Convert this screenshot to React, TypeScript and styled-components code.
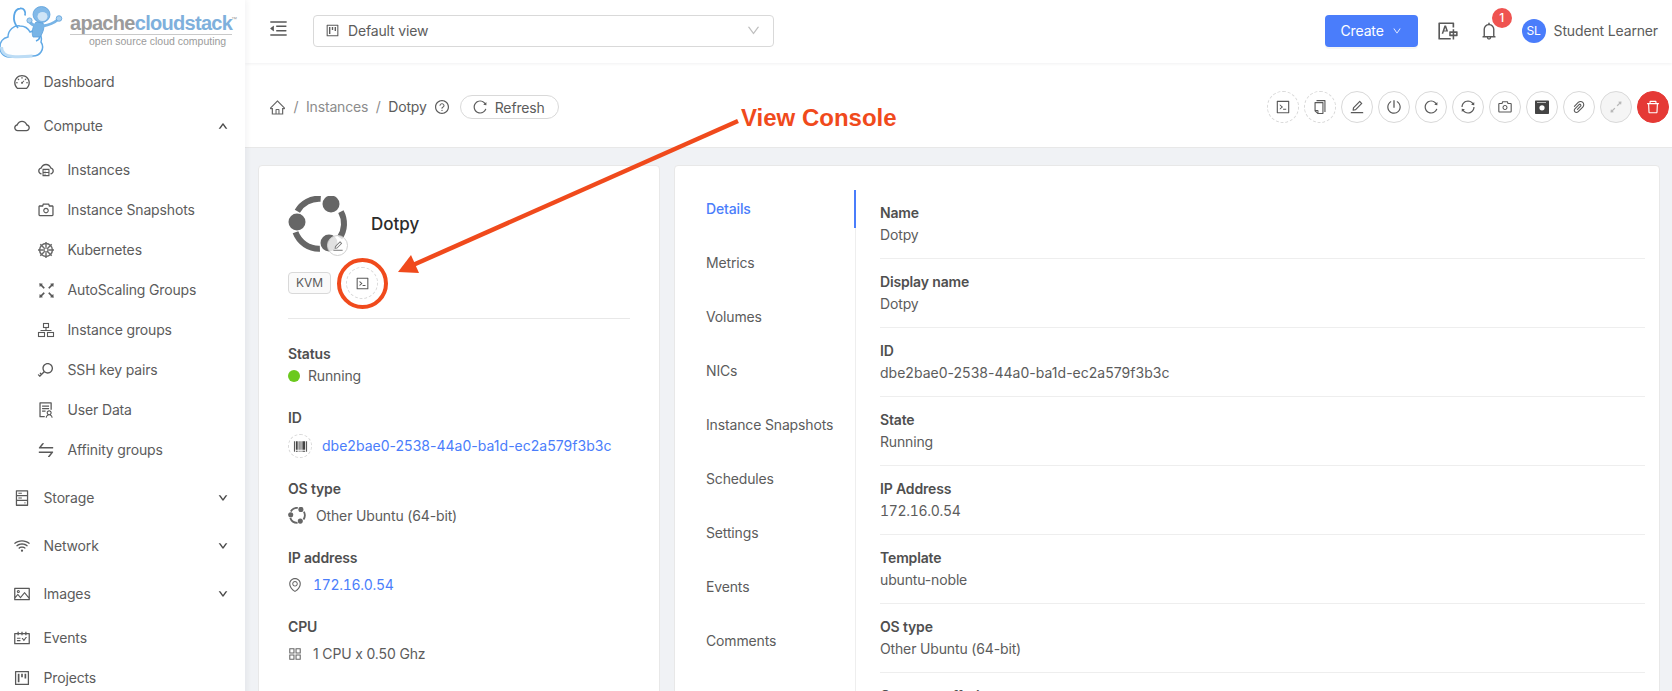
import { FC, ReactNode } from "react";
import styled, { createGlobalStyle } from "styled-components";
import {
  AiOutlineAppstore,
  AiOutlineArrowsAlt,
  AiOutlineBarcode,
  AiOutlineBell,
  AiOutlineCamera,
  AiOutlineCloud,
  AiOutlineCloudServer,
  AiOutlineCode,
  AiOutlineCopy,
  AiOutlineDashboard,
  AiOutlineDelete,
  AiOutlineDown,
  AiOutlineEdit,
  AiOutlineEnvironment,
  AiOutlineFullscreen,
  AiOutlineHdd,
  AiOutlineHome,
  AiOutlineKey,
  AiOutlineMenuFold,
  AiOutlinePaperClip,
  AiOutlinePicture,
  AiOutlinePoweroff,
  AiOutlineProject,
  AiOutlineQuestionCircle,
  AiOutlineReload,
  AiOutlineSchedule,
  AiOutlineSolution,
  AiOutlineSwap,
  AiOutlineSync,
  AiOutlineTranslation,
  AiOutlineUp,
  AiOutlineWifi,
} from "react-icons/ai";

const BLUE = "#4a7dfb";
const TEXT = "#5c5c5c";

const KubernetesIcon = () => (
  <svg width="1em" height="1em" viewBox="0 0 18 18" fill="none" stroke="#6a6a6a">
    <circle cx="9" cy="9" r="6.4" strokeWidth="1.5" />
    <circle cx="9" cy="9" r="2" strokeWidth="1.2" />
    <path
      d="M9 1v5.5M9 11.5V17M1 9h5.5M11.5 9H17M3.3 3.3l4 4M10.7 10.7l4 4M14.7 3.3l-4 4M7.3 10.7l-4 4"
      strokeWidth="1.4"
    />
  </svg>
);

const GroupsIcon = () => (
  <svg width="1em" height="1em" viewBox="0 0 18 18" fill="none" stroke="#595959" strokeWidth="1.1">
    <rect x="6.5" y="2.5" width="5" height="4" />
    <path d="M9 6.5v3M3.5 9.5h11" />
    <rect x="1.5" y="11.5" width="6" height="4" />
    <rect x="10.5" y="11.5" width="6" height="4" />
  </svg>
);

const BackupIcon = () => (
  <svg width="1em" height="1em" viewBox="0 0 16 16">
    <path d="M1 2.5c0-.6.4-1 1-1h12c.6 0 1 .4 1 1V14c0 .6-.4 1-1 1H2c-.6 0-1-.4-1-1z" fill="#444" />
    <rect x="3" y="3" width="9" height="1" fill="#bbb" />
    <circle cx="8" cy="8.800" r="2.600" fill="#fff" />
  </svg>
);

type NavEntry = {
  label: string;
  icon: ReactNode;
  sub?: boolean;
  gap: number;
  arrow?: "up" | "down";
};

const navEntries: NavEntry[] = [
  { label: "Dashboard", icon: <AiOutlineDashboard />, gap: 0 },
  { label: "Compute", icon: <AiOutlineCloud />, gap: 4, arrow: "up" },
  { label: "Instances", icon: <AiOutlineCloudServer />, sub: true, gap: 4 },
  { label: "Instance Snapshots", icon: <AiOutlineCamera />, sub: true, gap: 0 },
  { label: "Kubernetes", icon: <KubernetesIcon />, sub: true, gap: 0 },
  { label: "AutoScaling Groups", icon: <AiOutlineFullscreen size={21} />, sub: true, gap: 0 },
  { label: "Instance groups", icon: <GroupsIcon />, sub: true, gap: 0 },
  { label: "SSH key pairs", icon: <AiOutlineKey />, sub: true, gap: 0 },
  { label: "User Data", icon: <AiOutlineSolution />, sub: true, gap: 0 },
  { label: "Affinity groups", icon: <AiOutlineSwap size={20} />, sub: true, gap: 0 },
  { label: "Storage", icon: <AiOutlineHdd />, gap: 8, arrow: "down" },
  { label: "Network", icon: <AiOutlineWifi />, gap: 8, arrow: "down" },
  { label: "Images", icon: <AiOutlinePicture />, gap: 8, arrow: "down" },
  { label: "Events", icon: <AiOutlineSchedule />, gap: 4 },
  { label: "Projects", icon: <AiOutlineProject />, gap: 0 },
];

const tabs = [
  "Details",
  "Metrics",
  "Volumes",
  "NICs",
  "Instance Snapshots",
  "Schedules",
  "Settings",
  "Events",
  "Comments",
];

type ValueKind = "text" | "id" | "ip";

const details: { label: string; value: string; kind: ValueKind }[] = [
  { label: "Name", value: "Dotpy", kind: "text" },
  { label: "Display name", value: "Dotpy", kind: "text" },
  { label: "ID", value: "dbe2bae0-2538-44a0-ba1d-ec2a579f3b3c", kind: "id" },
  { label: "State", value: "Running", kind: "text" },
  { label: "IP Address", value: "172.16.0.54", kind: "ip" },
  { label: "Template", value: "ubuntu-noble", kind: "text" },
  { label: "OS type", value: "Other Ubuntu (64-bit)", kind: "text" },
];

const actions: { icon: ReactNode; kind: "dashed" | "plain" | "muted" | "danger" }[] = [
  { icon: <AiOutlineCode />, kind: "dashed" },
  { icon: <AiOutlineCopy />, kind: "dashed" },
  { icon: <AiOutlineEdit />, kind: "plain" },
  { icon: <AiOutlinePoweroff />, kind: "plain" },
  { icon: <AiOutlineReload />, kind: "plain" },
  { icon: <AiOutlineSync />, kind: "plain" },
  { icon: <AiOutlineCamera />, kind: "plain" },
  { icon: <BackupIcon />, kind: "plain" },
  { icon: <AiOutlinePaperClip />, kind: "plain" },
  { icon: <AiOutlineArrowsAlt />, kind: "muted" },
  { icon: <AiOutlineDelete />, kind: "danger" },
];

const UbuntuIcon: FC<{ size: number }> = ({ size }) => (
  <svg width={size} height={size} viewBox="0 0 60 60" fill="none">
    <g stroke="#666" strokeWidth="6">
      <path d="M9.35 15.2A25 25 0 0 1 32.7 2.75" />
      <path d="M52.9 15.6A25 25 0 0 1 51.7 41.7" />
      <path d="M31.9 52.7A25 25 0 0 1 7.5 36.25" />
    </g>
    <g fill="#666">
      <circle cx="43" cy="8" r="8.5" />
      <circle cx="9" cy="26" r="8.5" />
      <circle cx="41" cy="47" r="8.5" />
    </g>
  </svg>
);

const LogoMark = () => (
  <svg width="64" height="58" viewBox="0 0 64 58" fill="none">
    <path
      d="M9 55C3 55 0 50 0 45c0-5 3-9 8-10 0-7 6-12 12-11 4 0 8 2 10 6 2-1 5-1 7 0 4 2 5 6 4 10 2 3 2 7 0 10-2 3-5 4-8 4-8 1-16 1-24 1z"
      fill="#fdfeff"
      stroke="#62aae6"
      strokeWidth="1.5"
    />
    <path d="M1.500 45c0 6 5 9 11 9.500 7 .5 14 0 20-.5" stroke="#bcdcf5" strokeWidth="3" />
    <path d="M18 26C11 18 14 7 20 6.500c4-.5 6 3 5 7" stroke="#5aa6e6" strokeWidth="1.8" />
    <path d="M38 29c3 3 3 8-2 10" stroke="#5aa6e6" strokeWidth="1.6" />
    <path d="M33 35c-2-5 0-11 3-15l7 1c2 4 0 10-3 14z" fill="#78b4e6" stroke="#5a9fdb" strokeWidth="0.8" />
    <ellipse cx="41.500" cy="12.500" rx="8.500" ry="8" fill="#82b9e8" stroke="#5a9fdb" strokeWidth="0.8" />
    <ellipse cx="42.500" cy="14.500" rx="5" ry="4.500" fill="#cfe5f7" />
    <path d="M43 24c6-1 11-3 15-6.500" stroke="#78b4e6" strokeWidth="2.8" strokeLinecap="round" />
    <circle cx="59" cy="16.500" r="2.800" fill="#a9d0f0" stroke="#5a9fdb" strokeWidth="0.8" />
    <path d="M36 24c-3-1-5-2-6-4" stroke="#78b4e6" strokeWidth="2.800" strokeLinecap="round" />
    <circle cx="29.500" cy="18.500" r="2.600" fill="#a9d0f0" stroke="#5a9fdb" strokeWidth="0.8" />
  </svg>
);

const ConsoleArrow = () => (
  <ArrowCanvas width="1672" height="691" viewBox="0 0 1672 691">
    <path d="M738 121L413 265" stroke="#f04a1c" strokeWidth="4.500" fill="none" />
    <path d="M398 272L411 255L419 273Z" fill="#f04a1c" />
  </ArrowCanvas>
);

const App = () => (
  <>
    <GlobalStyle />
    <Shell>
      <Sidebar>
        <Logo>
          <LogoMark />
          <Wordmark>
            <Brand>
              apache<BrandBlue>cloudstack</BrandBlue>
              <Tm>™</Tm>
            </Brand>
            <BrandSub>open source cloud computing</BrandSub>
          </Wordmark>
        </Logo>
        <Menu>
          {navEntries.map((entry) => (
            <MenuItem key={entry.label} $sub={entry.sub} $gap={entry.gap}>
              <MenuIcon>{entry.icon}</MenuIcon>
              <span>{entry.label}</span>
              {entry.arrow && (
                <MenuArrow>
                  {entry.arrow === "up" ? <AiOutlineUp /> : <AiOutlineDown />}
                </MenuArrow>
              )}
            </MenuItem>
          ))}
        </Menu>
      </Sidebar>

      <Content>
        <Header>
          <Collapse>
            <AiOutlineMenuFold />
          </Collapse>
          <ViewSelect>
            <AiOutlineProject />
            <ViewName>Default view</ViewName>
            <SelectArrow>
              <AiOutlineDown />
            </SelectArrow>
          </ViewSelect>
          <HeaderRight>
            <CreateButton>
              Create
              <AiOutlineDown />
            </CreateButton>
            <Translate>
              <AiOutlineTranslation />
            </Translate>
            <Bell>
              <AiOutlineBell />
              <Badge>1</Badge>
            </Bell>
            <User>
              <UserAvatar>SL</UserAvatar>
              Student Learner
            </User>
          </HeaderRight>
        </Header>

        <Crumbs>
          <CrumbTrail>
            <HomeIcon>
              <AiOutlineHome />
            </HomeIcon>
            <Slash>/</Slash>
            <CrumbLink>Instances</CrumbLink>
            <Slash>/</Slash>
            <CrumbCurrent>Dotpy</CrumbCurrent>
            <HelpIcon>
              <AiOutlineQuestionCircle />
            </HelpIcon>
            <RefreshButton>
              <AiOutlineReload />
              Refresh
            </RefreshButton>
          </CrumbTrail>
          <Actions>
            {actions.map((action, i) => (
              <ActionButton key={i} $kind={action.kind}>
                {action.icon}
              </ActionButton>
            ))}
          </Actions>
        </Crumbs>

        <Body>
          <InfoCard>
            <Identity>
              <AvatarWrap>
                <UbuntuIcon size={60} />
                <AvatarEdit>
                  <AiOutlineEdit />
                </AvatarEdit>
              </AvatarWrap>
              <InstanceName>Dotpy</InstanceName>
            </Identity>
            <TagRow>
              <Tag>KVM</Tag>
              <ConsoleButton>
                <AiOutlineCode />
                <ConsoleRing />
              </ConsoleButton>
            </TagRow>
            <Rule />
            <Field>
              <FieldLabel>Status</FieldLabel>
              <FieldValue $top={0}>
                <StatusDot />
                Running
              </FieldValue>
            </Field>
            <Field>
              <FieldLabel>ID</FieldLabel>
              <FieldValue $top={5}>
                <BarcodeButton>
                  <AiOutlineBarcode />
                </BarcodeButton>
                <ValueLink>
                  <ValueText $kind="id">dbe2bae0-2538-44a0-ba1d-ec2a579f3b3c</ValueText>
                </ValueLink>
              </FieldValue>
            </Field>
            <Field>
              <FieldLabel>OS type</FieldLabel>
              <FieldValue $top={5}>
                <OsIcon>
                  <UbuntuIcon size={18} />
                </OsIcon>
                Other Ubuntu (64-bit)
              </FieldValue>
            </Field>
            <Field>
              <FieldLabel>IP address</FieldLabel>
              <FieldValue $top={5}>
                <SmallIcon>
                  <AiOutlineEnvironment />
                </SmallIcon>
                <ValueLink>
                  <ValueText $kind="ip">172.16.0.54</ValueText>
                </ValueLink>
              </FieldValue>
            </Field>
            <Field>
              <FieldLabel>CPU</FieldLabel>
              <FieldValue $top={5}>
                <SmallIcon>
                  <AiOutlineAppstore />
                </SmallIcon>
                1 CPU x 0.50 Ghz
              </FieldValue>
            </Field>
          </InfoCard>

          <DetailCard>
            <TabList>
              {tabs.map((tab, i) => (
                <Tab key={tab} $active={i === 0}>
                  {tab}
                </Tab>
              ))}
            </TabList>
            <DetailList>
              {details.map((row) => (
                <DetailRow key={row.label}>
                  <DetailLabel>{row.label}</DetailLabel>
                  <ValueText $kind={row.kind}>{row.value}</ValueText>
                </DetailRow>
              ))}
              <DetailRow>
                <DetailLabel>Compute offering</DetailLabel>
              </DetailRow>
            </DetailList>
          </DetailCard>
        </Body>
      </Content>
      <ConsoleArrow />
      <CalloutLabel>View Console</CalloutLabel>
    </Shell>
  </>
);

export default App;

const GlobalStyle = createGlobalStyle`
  html, body {
    margin: 0;
    height: 691px;
    overflow: hidden;
    background: #f0f2f5;
    color: ${TEXT};
    font-family: Inter, "Noto Sans", sans-serif;
    font-size: 14px;
    line-height: 22px;
    letter-spacing: -0.15px;
  }
  * {
    box-sizing: border-box;
  }
`;

const Shell = styled.div`
  position: relative;
  display: grid;
  grid-template-columns: 245px 1fr;
  height: 691px;
  overflow: hidden;
`;

const ArrowCanvas = styled.svg`
  position: absolute;
  inset: 0;
  pointer-events: none;
  z-index: 3;
`;

const CalloutLabel = styled.div`
  position: absolute;
  left: 741px;
  top: 104px;
  z-index: 3;
  color: #f04a1c;
  font-family: "Liberation Sans", Arial, sans-serif;
  font-size: 24px;
  font-weight: 700;
  line-height: 28px;
  letter-spacing: 0;
  white-space: nowrap;
`;

const Sidebar = styled.aside`
  background: #fff;
  box-shadow: 2px 0 6px rgba(0, 21, 41, 0.05);
  z-index: 2;
  overflow: hidden;
`;

const Logo = styled.div`
  display: flex;
  align-items: flex-start;
  height: 62px;
  padding-top: 2px;
  gap: 6px;
`;

const Wordmark = styled.div`
  display: flex;
  flex-direction: column;
  margin-top: 10px;
  width: 162px;
`;

const Brand = styled.div`
  position: relative;
  border-bottom: 1px solid #c9c9c9;
  color: #9b9b9b;
  font-family: "Liberation Sans", Arial, sans-serif;
  font-size: 20px;
  font-weight: 700;
  line-height: 22px;
  letter-spacing: -0.7px;
  white-space: nowrap;
`;

const BrandBlue = styled.span`
  color: #7fb0dc;
`;

const Tm = styled.span`
  position: absolute;
  top: -4px;
  left: 161px;
  font-size: 6px;
  letter-spacing: 0;
  font-weight: 400;
`;

const BrandSub = styled.div`
  margin-left: 19px;
  color: #9b9b9b;
  font-family: "Liberation Sans", Arial, sans-serif;
  font-size: 10.5px;
  line-height: 13px;
  letter-spacing: 0;
  white-space: nowrap;
`;

const Menu = styled.nav`
  display: flex;
  flex-direction: column;
`;

const MenuItem = styled.div<{ $sub?: boolean; $gap: number }>`
  display: flex;
  align-items: center;
  height: 40px;
  flex: none;
  margin-top: ${(p) => p.$gap}px;
  padding-left: ${(p) => (p.$sub ? 37 : 13)}px;
  padding-right: 16px;
  white-space: nowrap;
`;

const MenuIcon = styled.span`
  display: inline-flex;
  justify-content: center;
  width: 18px;
  margin-right: 12.5px;
  font-size: 18px;
  color: #595959;

  svg {
    flex: none;
  }
`;

const MenuArrow = styled.span`
  display: inline-flex;
  margin-left: auto;
  margin-right: 1px;
  font-size: 10px;
  color: #333;

  svg {
    stroke: currentColor;
    stroke-width: 60;
  }
`;

const Content = styled.main`
  display: flex;
  flex-direction: column;
  min-width: 0;
`;

const Header = styled.header`
  display: flex;
  align-items: center;
  flex: none;
  height: 63px;
  padding-left: 23px;
  padding-right: 14px;
  padding-bottom: 2px;
  background: #fff;
  box-shadow: 0 1px 3px rgba(0, 21, 41, 0.06);
  z-index: 1;
`;

const Collapse = styled.span`
  display: inline-flex;
  margin-top: -4px;
  margin-right: 24px;
  font-size: 21px;
  color: #595959;
`;

const ViewSelect = styled.div`
  display: flex;
  align-items: center;
  width: 461px;
  height: 32px;
  padding: 0 11px;
  border: 1px solid #d9d9d9;
  border-radius: 4px;
  font-size: 14px;

  svg {
    font-size: 15px;
  }
`;

const ViewName = styled.span`
  margin-left: 8px;
`;

const SelectArrow = styled.span`
  display: inline-flex;
  margin-left: auto;
  margin-right: 1px;
  color: #bfbfbf;
`;

const HeaderRight = styled.div`
  display: flex;
  align-items: center;
  margin-left: auto;
`;

const CreateButton = styled.button`
  display: flex;
  align-items: center;
  justify-content: center;
  gap: 8px;
  width: 93px;
  height: 32px;
  border: none;
  border-radius: 4px;
  background: ${BLUE};
  color: #fff;
  box-shadow: 0 2px 0 rgba(0, 0, 0, 0.04);
  font-family: inherit;
  font-size: 14px;
  letter-spacing: inherit;

  svg {
    font-size: 10px;
  }
`;

const Translate = styled.span`
  display: inline-flex;
  margin-left: 19px;
  font-size: 22px;
  color: #595959;
`;

const Bell = styled.span`
  position: relative;
  display: inline-flex;
  margin-left: 20px;
  font-size: 20px;
  color: #595959;
`;

const Badge = styled.span`
  position: absolute;
  top: -13px;
  left: 13px;
  width: 20px;
  height: 20px;
  border-radius: 50%;
  background: #ef5350;
  color: #fff;
  font-size: 12px;
  font-weight: 500;
  line-height: 20px;
  text-align: center;
`;

const User = styled.div`
  display: flex;
  align-items: center;
  gap: 8px;
  margin-left: 23px;
  white-space: nowrap;
`;

const UserAvatar = styled.span`
  width: 24px;
  height: 24px;
  border-radius: 50%;
  background: ${BLUE};
  color: #fff;
  font-size: 12px;
  line-height: 24px;
  text-align: center;
`;

const Crumbs = styled.div`
  display: flex;
  align-items: center;
  justify-content: space-between;
  flex: none;
  height: 85px;
  padding-top: 4px;
  padding-left: 24px;
  padding-right: 3px;
  background: #fff;
  border-bottom: 1px solid #e8e8e8;
`;

const CrumbTrail = styled.div`
  display: flex;
  align-items: center;
`;

const HomeIcon = styled.span`
  display: inline-flex;
  font-size: 17px;
  color: #666;
`;

const Slash = styled.span`
  margin: 0 7.5px;
  color: #8c8c8c;
`;

const CrumbLink = styled.span`
  color: #8c8c8c;
`;

const CrumbCurrent = styled.span`
  color: ${TEXT};
`;

const HelpIcon = styled.span`
  display: inline-flex;
  margin-left: 7px;
  font-size: 16px;
`;

const RefreshButton = styled.button`
  display: flex;
  align-items: center;
  gap: 7px;
  height: 24px;
  margin-left: 10px;
  padding: 0 13px 0 11px;
  border: 1px solid #d9d9d9;
  border-radius: 12px;
  background: #fff;
  color: ${TEXT};
  font-family: inherit;
  font-size: 14px;
  letter-spacing: inherit;

  svg {
    font-size: 16px;
  }
`;

const Actions = styled.div`
  display: flex;
  gap: 5px;
`;

const ActionButton = styled.button<{ $kind: "dashed" | "plain" | "muted" | "danger" }>`
  display: flex;
  align-items: center;
  justify-content: center;
  width: 32px;
  height: 32px;
  padding: 0;
  border-radius: 50%;
  border: 1px ${(p) => (p.$kind === "dashed" ? "dashed" : "solid")}
    ${(p) => (p.$kind === "danger" ? "#e53935" : "#d9d9d9")};
  background: ${(p) =>
    p.$kind === "danger" ? "#e53935" : p.$kind === "muted" ? "#f5f5f5" : "#fff"};
  color: ${(p) =>
    p.$kind === "danger" ? "#fff" : p.$kind === "muted" ? "#b8b8b8" : "#595959"};
  font-size: 16px;
`;

const Body = styled.div`
  display: grid;
  grid-template-columns: 402px 1fr;
  gap: 14px;
  padding: 17px 12px 0 13px;
  flex: 1;
  min-height: 0;
`;

const Card = styled.section`
  background: #fff;
  border: 1px solid #e8e8e8;
  border-radius: 4px;
`;

const InfoCard = styled(Card)`
  padding: 30px 29px 0;
  height: 560px;
`;

const Identity = styled.div`
  display: flex;
  align-items: center;
  gap: 23px;
`;

const AvatarWrap = styled.div`
  position: relative;
  width: 60px;
  height: 60px;
`;

const AvatarEdit = styled.span`
  position: absolute;
  left: 39px;
  top: 39px;
  display: flex;
  align-items: center;
  justify-content: center;
  width: 21px;
  height: 21px;
  border: 1px solid #d0d0d0;
  border-radius: 50%;
  background: rgba(255, 255, 255, 0.8);
  font-size: 12px;
  color: #777;
`;

const InstanceName = styled.div`
  margin-top: -4px;
  color: #2c2c2c;
  font-size: 17px;
  font-weight: 500;
  letter-spacing: 0;
`;

const TagRow = styled.div`
  display: flex;
  align-items: center;
  margin-top: 11px;
`;

const Tag = styled.span`
  height: 22px;
  padding: 0 7px;
  border: 1px solid #d9d9d9;
  border-radius: 4px;
  background: #fafafa;
  font-size: 12px;
  line-height: 20px;
  letter-spacing: 0;
`;

const ConsoleButton = styled.span`
  position: relative;
  display: flex;
  align-items: center;
  justify-content: center;
  width: 32px;
  height: 32px;
  margin-left: 15px;
  border: 1px dashed #d9d9d9;
  border-radius: 50%;
  font-size: 15px;
  color: #595959;
`;

const ConsoleRing = styled.span`
  position: absolute;
  left: -10.5px;
  top: -10.5px;
  width: 51px;
  height: 51px;
  border: 4px solid #f04a1c;
  border-radius: 50%;
`;

const Rule = styled.hr`
  height: 1px;
  margin: 19px 0 24px;
  border: none;
  background: #e8e8e8;
`;

const Field = styled.div`
  margin-bottom: 20px;
`;

const FieldLabel = styled.div`
  color: #4f4f4f;
  font-weight: 600;
`;

const FieldValue = styled.div<{ $top: number }>`
  display: flex;
  align-items: center;
  margin-top: ${(p) => p.$top}px;
  min-height: 22px;
`;

const ValueText = styled.div<{ $kind: ValueKind }>`
  font-variant-numeric: ${(p) => (p.$kind === "ip" ? "tabular-nums" : "normal")};
  letter-spacing: ${(p) => (p.$kind === "ip" ? "-0.3px" : p.$kind === "id" ? "0.02px" : "inherit")};
`;

const StatusDot = styled.span`
  width: 12px;
  height: 12px;
  margin-right: 8px;
  border-radius: 50%;
  background: #6bc91e;
`;

const BarcodeButton = styled.span`
  display: flex;
  align-items: center;
  justify-content: center;
  width: 24px;
  height: 24px;
  margin-right: 10px;
  border: 1px dashed #d9d9d9;
  border-radius: 50%;
  font-size: 15px;
  color: #444;
`;

const ValueLink = styled.span`
  color: ${BLUE};
`;

const OsIcon = styled.span`
  display: inline-flex;
  margin-right: 10px;
`;

const SmallIcon = styled.span`
  display: inline-flex;
  width: 16px;
  margin-left: -1px;
  margin-right: 10px;
  font-size: 16px;
  color: #666;
`;

const DetailCard = styled(Card)`
  display: grid;
  grid-template-columns: 181px 1fr;
  height: 560px;
  padding-top: 24px;
`;

const TabList = styled.div`
  display: flex;
  flex-direction: column;
  gap: 16px;
  border-right: 1px solid #eee;
`;

const Tab = styled.div<{ $active?: boolean }>`
  height: 38px;
  flex: none;
  margin-right: -1px;
  padding-left: 31px;
  border-right: 2px solid ${(p) => (p.$active ? BLUE : "transparent")};
  color: ${(p) => (p.$active ? BLUE : TEXT)};
  font-weight: ${(p) => (p.$active ? 500 : 400)};
  line-height: 38px;
  white-space: nowrap;
`;

const DetailList = styled.div`
  padding: 0 14px 0 24px;
`;

const DetailRow = styled.div`
  padding: 12px 0;
  border-bottom: 1px solid #eee;
`;

const DetailLabel = styled.div`
  color: #4f4f4f;
  font-weight: 600;
`;
